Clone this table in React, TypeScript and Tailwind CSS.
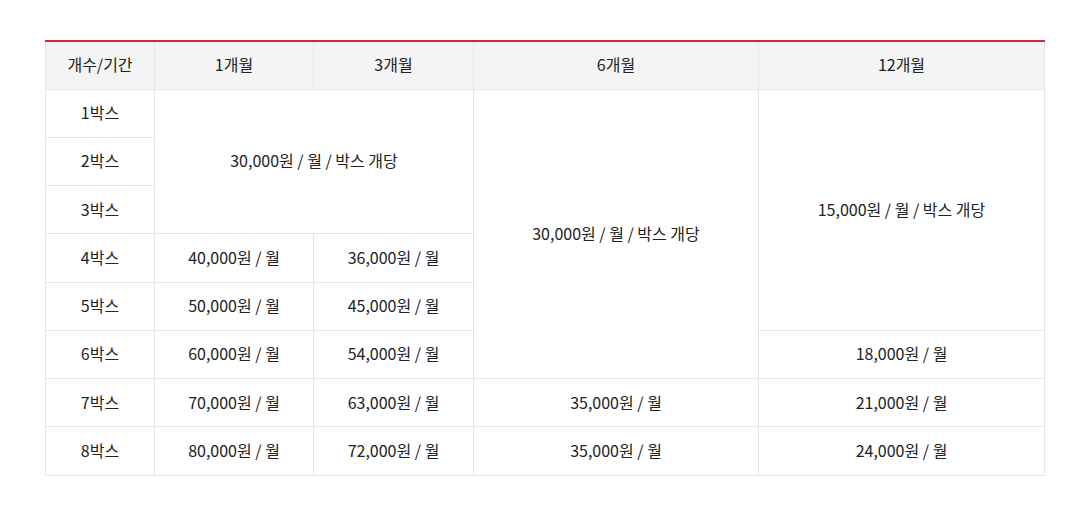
const font = { fontFamily: '"Noto Sans CJK KR", "Noto Sans", sans-serif' };

const cell = "border border-[#e6e6e6] text-center align-middle text-[16px] text-[#222] font-normal p-0 pb-[2px]";

export default function App() {
  return (
    <div className="bg-white w-[1089px] h-[516px] pt-[40px] pl-[45px]" style={font}>
      <table className="border-collapse table-fixed w-[999px] border-t-2 border-t-[#d7282f]">
        <colgroup>
          <col className="w-[109px]" />
          <col className="w-[159px]" />
          <col className="w-[160px]" />
          <col className="w-[285px]" />
          <col className="w-[286px]" />
        </colgroup>
        <thead>
          <tr className="h-[48px] bg-[#f4f4f4]">
            <th className={cell + " border-t-0"}>개수/기간</th>
            <th className={cell + " border-t-0"}>1개월</th>
            <th className={cell + " border-t-0"}>3개월</th>
            <th className={cell + " border-t-0"}>6개월</th>
            <th className={cell + " border-t-0"}>12개월</th>
          </tr>
        </thead>
        <tbody>
          <tr className="h-[48.25px]">
            <td className={cell}>1박스</td>
            <td className={cell} colSpan={2} rowSpan={3}>30,000원 / 월 / 박스 개당</td>
            <td className={cell} rowSpan={6}>30,000원 / 월 / 박스 개당</td>
            <td className={cell} rowSpan={5}>15,000원 / 월 / 박스 개당</td>
          </tr>
          <tr className="h-[48.25px]">
            <td className={cell}>2박스</td>
          </tr>
          <tr className="h-[48.25px]">
            <td className={cell}>3박스</td>
          </tr>
          <tr className="h-[48.25px]">
            <td className={cell}>4박스</td>
            <td className={cell}>40,000원 / 월</td>
            <td className={cell}>36,000원 / 월</td>
          </tr>
          <tr className="h-[48.25px]">
            <td className={cell}>5박스</td>
            <td className={cell}>50,000원 / 월</td>
            <td className={cell}>45,000원 / 월</td>
          </tr>
          <tr className="h-[48.25px]">
            <td className={cell}>6박스</td>
            <td className={cell}>60,000원 / 월</td>
            <td className={cell}>54,000원 / 월</td>
            <td className={cell}>18,000원 / 월</td>
          </tr>
          <tr className="h-[48.25px]">
            <td className={cell}>7박스</td>
            <td className={cell}>70,000원 / 월</td>
            <td className={cell}>63,000원 / 월</td>
            <td className={cell}>35,000원 / 월</td>
            <td className={cell}>21,000원 / 월</td>
          </tr>
          <tr className="h-[48.25px]">
            <td className={cell}>8박스</td>
            <td className={cell}>80,000원 / 월</td>
            <td className={cell}>72,000원 / 월</td>
            <td className={cell}>35,000원 / 월</td>
            <td className={cell}>24,000원 / 월</td>
          </tr>
        </tbody>
      </table>
    </div>
  );
}
